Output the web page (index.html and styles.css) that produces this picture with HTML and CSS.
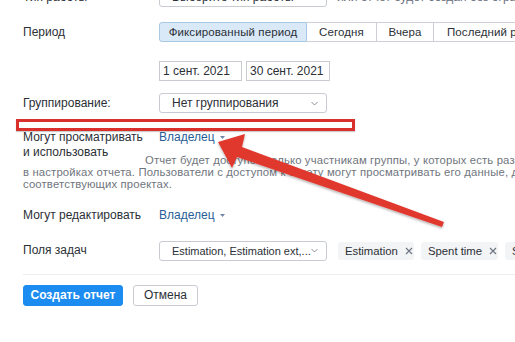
FILE: index.html
```html
<!DOCTYPE html>
<html lang="ru">
<head>
<meta charset="utf-8">
<title>Создать отчет</title>
<link rel="stylesheet" href="styles.css">
</head>
<body>
<div class="form">
  <div class="row row-type">
    <div class="label">Тип работы</div>
    <div class="control">
      <div class="select">Выберите тип работы<svg class="chev" width="7" height="5" viewBox="0 0 7 5"><polyline points="0.5,1 3.5,4 6.5,1" fill="none" stroke="#8a9099" stroke-width="1"/></svg></div>
      <span class="hint">или отчет будет создан без ограничений по типу работы</span>
    </div>
  </div>

  <div class="row row-period">
    <div class="label">Период</div>
    <div class="control">
      <div class="segments">
        <span class="seg active">Фиксированный период</span>
        <span class="seg">Сегодня</span>
        <span class="seg">Вчера</span>
        <span class="seg">Последний рабочий день</span>
      </div>
    </div>
  </div>

  <div class="row row-dates">
    <div class="label"></div>
    <div class="control">
      <div class="date">1 сент. 2021</div>
      <div class="date">30 сент. 2021</div>
    </div>
  </div>

  <div class="row row-group">
    <div class="label">Группирование:</div>
    <div class="control">
      <div class="select">Нет группирования<svg class="chev" width="7" height="5" viewBox="0 0 7 5"><polyline points="0.5,1 3.5,4 6.5,1" fill="none" stroke="#8a9099" stroke-width="1"/></svg></div>
    </div>
  </div>

  <div class="row row-owner">
    <div class="label two">Могут просматривать<br>и использовать</div>
    <div class="control top">
      <span class="owner">Владелец<svg class="caret" width="5" height="3" viewBox="0 0 5 3"><polygon points="0,0 5,0 2.5,3" fill="#6f87a6"/></svg></span>
    </div>
  </div>
  <p class="desc"><span class="l1">Отчет будет доступен только участникам группы, у которых есть разрешение на просмотр задач</span><br>в настройках отчета. Пользователи с доступом к отчету могут просматривать его данные, даже если у них нет доступа к<br>соответствующих проектах.</p>

  <div class="row row-edit">
    <div class="label">Могут редактировать</div>
    <div class="control">
      <span class="owner">Владелец<svg class="caret" width="5" height="3" viewBox="0 0 5 3"><polygon points="0,0 5,0 2.5,3" fill="#6f87a6"/></svg></span>
    </div>
  </div>

  <div class="row row-fields">
    <div class="label">Поля задач</div>
    <div class="control">
      <div class="select small">Estimation, Estimation ext,...<svg class="chev" width="7" height="5" viewBox="0 0 7 5"><polyline points="0.5,1 3.5,4 6.5,1" fill="none" stroke="#8a9099" stroke-width="1"/></svg></div>
      <span class="chip">Estimation<svg class="x" width="8" height="8" viewBox="0 0 8 8"><path d="M1 1L7 7M7 1L1 7" stroke="#6b7280" stroke-width="1.1"/></svg></span>
      <span class="chip">Spent time<svg class="x" width="8" height="8" viewBox="0 0 8 8"><path d="M1 1L7 7M7 1L1 7" stroke="#6b7280" stroke-width="1.1"/></svg></span>
      <span class="chip">Summary<svg class="x" width="8" height="8" viewBox="0 0 8 8"><path d="M1 1L7 7M7 1L1 7" stroke="#6b7280" stroke-width="1.1"/></svg></span>
    </div>
  </div>

  <div class="actions">
    <button class="btn primary">Создать отчет</button>
    <button class="btn">Отмена</button>
  </div>
</div>

<div class="highlight"></div>
<svg class="arrow" width="515" height="342" viewBox="0 0 515 342">
  <defs>
    <filter id="sh" x="-10%" y="-10%" width="120%" height="130%">
      <feDropShadow dx="0" dy="1.5" stdDeviation="1" flood-color="#000" flood-opacity="0.3"/>
    </filter>
  </defs>
  <polygon filter="url(#sh)" fill="#e1382f" points="218,142 245,134 242,147 444,222 442,227 237,157 232,168"/>
</svg>
</body>
</html>
```

FILE: styles.css
```css
html, body {
  margin: 0;
  padding: 0;
  background: #fff;
  overflow: hidden;
  width: 515px;
  height: 342px;
}
body {
  font-family: "Liberation Sans", Arial, sans-serif;
  font-size: 12px;
  color: #2b2f36;
  position: relative;
}
.form {
  padding-left: 23px;
  margin-top: -13px;
  width: 700px;
}
.row {
  display: grid;
  grid-template-columns: 136px 1fr;
  align-items: center;
}
.label {
  line-height: 15px;
  white-space: nowrap;
}
.control {
  display: flex;
  align-items: center;
  gap: 10px;
  white-space: nowrap;
}
.control.top { align-self: start; }
.row-type { height: 20px; }
.row-period { margin-top: 15px; height: 20px; }
.row-dates { margin-top: 19px; height: 20px; }
.row-dates .control { gap: 4px; }
.row-group { margin-top: 12px; height: 20px; }
.row-owner { margin-top: 17px; align-items: start; }
.row-edit { margin-top: 17px; }
.row-fields { margin-top: 18px; height: 20px; }
.row-fields .control { gap: 0; }

.select {
  box-sizing: border-box;
  width: 168px;
  height: 20px;
  border: 1px solid #c8ccd2;
  border-radius: 3px;
  padding: 0 8px 0 12px;
  display: flex;
  align-items: center;
  justify-content: space-between;
  color: #2b2f36;
  background: #fff;
}
.select.small { font-size: 11px; }
.chev { flex: none; }
.hint { color: #6b7280; }

.segments {
  display: flex;
  height: 20px;
  font-size: 11.5px;
}
.seg {
  box-sizing: border-box;
  height: 20px;
  border: 1px solid #cdd1d6;
  border-left: none;
  display: flex;
  align-items: center;
  justify-content: center;
  color: #2b2f36;
  letter-spacing: 0.1px;
}
.seg:nth-child(1) { width: 148px; }
.seg:nth-child(2) { width: 70px; }
.seg:nth-child(3) { width: 57px; }
.seg:nth-child(4) { width: 140px; justify-content: flex-start; padding-left: 13px; }
.seg.active {
  background: #d9e9f8;
  border: 1px solid #a9c8e4;
  border-radius: 3px 0 0 3px;
}

.date {
  box-sizing: border-box;
  height: 20px;
  border: 1px solid #c8ccd2;
  display: flex;
  align-items: center;
  padding-left: 3px;
  color: #2b2f36;
}
.date:nth-child(1) { width: 83px; }
.date:nth-child(2) { width: 84px; }

.owner {
  line-height: 15px;
  color: #285d97;
  display: inline-flex;
  align-items: center;
  gap: 5px;
}

.desc {
  margin: -6px 0 0 0;
  font-size: 11.3px;
  line-height: 12.2px;
  color: #6f757d;
  white-space: nowrap;
  letter-spacing: 0.15px;
}
.desc .l1 { padding-left: 122px; }

.chip {
  box-sizing: border-box;
  height: 18px;
  background: #f3f4f6;
  border-radius: 3px;
  display: inline-flex;
  align-items: center;
  padding: 0 6px 0 7px;
  gap: 7px;
  font-size: 11.3px;
  color: #2b2f36;
  margin-right: 7px;
}
.row-fields .select { margin-right: 11px; }
.chip:nth-of-type(1) { width: 76px; }
.chip:nth-of-type(2) { width: 77px; }
.x { flex: none; }

.actions {
  margin-top: 13px;
  border-top: 1px solid #ebedf0;
  padding-top: 10px;
  display: flex;
  gap: 10px;
}
.btn {
  box-sizing: border-box;
  height: 21px;
  font-family: inherit;
  font-size: 12px;
  border-radius: 3px;
  border: 1px solid #c8ccd2;
  background: #fff;
  color: #2b2f36;
  padding: 0;
  width: 65px;
}
.btn.primary {
  width: 100px;
  background: #1d8cf0;
  border-color: #1d8cf0;
  color: #fff;
  font-weight: bold;
}

.highlight {
  position: absolute;
  left: 16px;
  top: 119px;
  width: 339px;
  height: 12px;
  box-sizing: border-box;
  border: 3px solid #d9302c;
  box-shadow: 0 1px 1px rgba(0,0,0,0.2);
}
.arrow {
  position: absolute;
  left: 0;
  top: 0;
  pointer-events: none;
}
```
